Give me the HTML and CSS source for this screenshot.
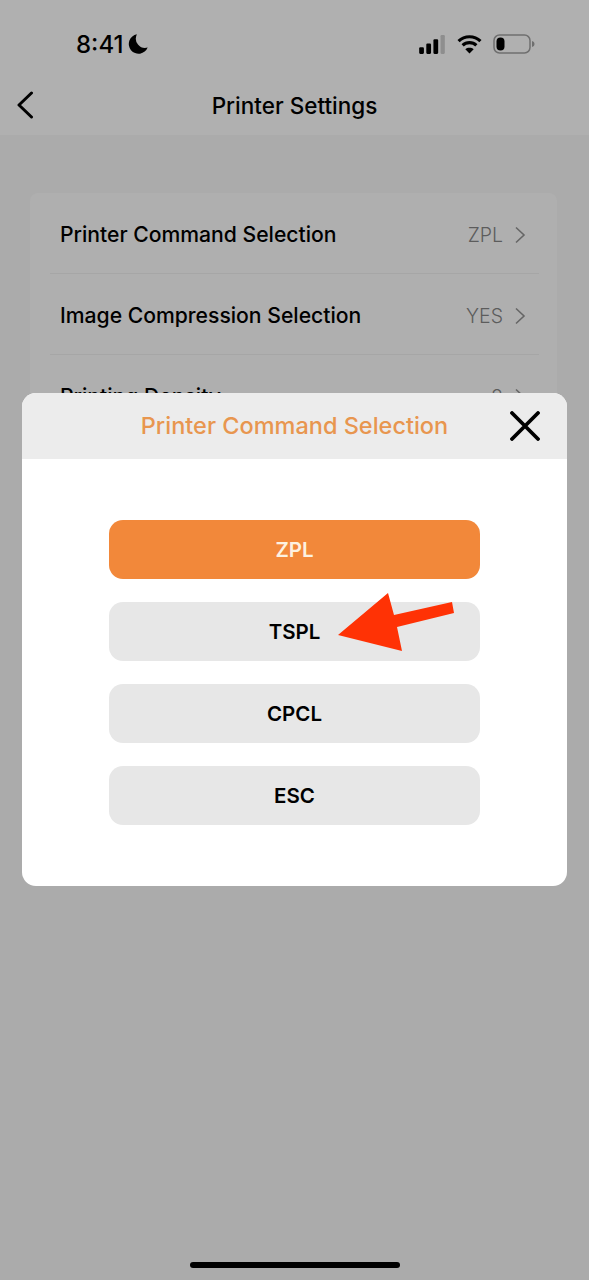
FILE: index.html
```html
<!DOCTYPE html>
<html lang="en">
<head>
    <meta charset="UTF-8">
    <meta name="viewport" content="width=device-width, initial-scale=1.0">
    <title>Printer Settings</title>
    <link rel="stylesheet" href="styles.css">
</head>
<body>
    <div class="screen">
        <div class="top">
            <div class="status-bar">
                <div class="status-time">
                    <span>8:41</span>
                    <svg class="moon" width="20" height="20" viewBox="0 0 18 18"><path d="M8 .3A8.800 8.800 0 1 0 17.700 12.200 8.400 8.400 0 0 1 8 .3Z" fill="#000"/></svg>
                </div>
                <div class="status-icons">
                    <svg width="28" height="19" viewBox="0 0 27 20">
                        <rect x="0" y="13" width="5" height="7" rx="1.2" fill="#000"/>
                        <rect x="7.5" y="9" width="5" height="11" rx="1.2" fill="#000"/>
                        <rect x="15" y="4.500" width="5" height="15.500" rx="1.2" fill="#000"/>
                        <rect x="22.500" y="0" width="4.500" height="20" rx="1.200" fill="#8e8e8e"/>
                    </svg>
                    <svg width="25" height="20" viewBox="0 0 24 19" fill="none" stroke="#000" stroke-width="3">
                        <path d="M1.500 6.700C7.300 1.100 16.700 1.100 22.500 6.700"/>
                        <path d="M5.400 10.800C9 7.300 15 7.300 18.600 10.800"/>
                        <path d="M12 18.500 8 14.500C10.200 12.700 13.800 12.700 16 14.500Z" fill="#000" stroke="none"/>
                    </svg>
                    <svg width="42" height="20" viewBox="0 0 42 20">
                        <rect x="1" y="1" width="36" height="18" rx="5.500" fill="none" stroke="#6f6f6f" stroke-width="1.500"/>
                        <rect x="3.500" y="3.500" width="8" height="13" rx="4" fill="#000"/>
                        <path d="M39 7c1.500 .4 2.500 1.500 2.500 3s-1 2.600-2.500 3Z" fill="#6f6f6f"/>
                    </svg>
                </div>
            </div>
            <div class="nav-bar">
                <svg class="back" width="18" height="28" viewBox="0 0 18 28" fill="none" stroke="#000" stroke-width="3" stroke-linecap="round" stroke-linejoin="round"><path d="M15.500 2 3 14 15.500 26"/></svg>
                <h1>Printer Settings</h1>
            </div>
        </div>

        <div class="card">
            <div class="row">
                <span class="row-name">Printer Command Selection</span>
                <span class="row-value">ZPL</span>
                <svg class="chevron" width="12" height="18" viewBox="0 0 12 18" fill="none" stroke="#666" stroke-width="1.600"><path d="M2 1.500 10 9 2 16.500"/></svg>
            </div>
            <div class="row">
                <span class="row-name">Image Compression Selection</span>
                <span class="row-value">YES</span>
                <svg class="chevron" width="12" height="18" viewBox="0 0 12 18" fill="none" stroke="#666" stroke-width="1.600"><path d="M2 1.500 10 9 2 16.500"/></svg>
            </div>
            <div class="row">
                <span class="row-name">Printing Density</span>
                <span class="row-value">8</span>
                <svg class="chevron" width="12" height="18" viewBox="0 0 12 18" fill="none" stroke="#666" stroke-width="1.600"><path d="M2 1.500 10 9 2 16.500"/></svg>
            </div>
        </div>

        <div class="modal">
            <div class="modal-head">
                <span class="modal-title">Printer Command Selection</span>
                <svg class="close" width="30" height="30" viewBox="0 0 30 30" fill="none" stroke="#000" stroke-width="3.800" stroke-linecap="round"><path d="M2 2 28 28M28 2 2 28"/></svg>
            </div>
            <div class="modal-body">
                <button class="option active">ZPL</button>
                <button class="option">TSPL</button>
                <button class="option">CPCL</button>
                <button class="option">ESC</button>
            </div>
        </div>

        <svg class="arrow" width="130" height="70" viewBox="0 0 130 70"><path d="M2 47 52 5 58 27 116 14 118 25 61 39 66 63Z" fill="#ff3205"/></svg>

        <div class="home-bar"></div>
    </div>
</body>
</html>
```

FILE: styles.css
```css
* {
    box-sizing: border-box;
}

body {
    margin: 0;
    font-family: Inter, "Liberation Sans", sans-serif;
    color: #000;
    background-color: #ababab;
}

.screen {
    position: relative;
    width: 589px;
    height: 1280px;
    overflow: hidden;
}

.top {
    height: 135px;
    background-color: #b0b0b0;
}

.status-bar {
    height: 78px;
    padding: 10px 54px 0 76px;
    display: flex;
    justify-content: space-between;
    align-items: center;
}

.status-time {
    display: flex;
    align-items: center;
    gap: 5px;
    font-size: 24px;
    font-weight: 500;
}

.status-icons {
    display: flex;
    align-items: center;
    gap: 11px;
}

.nav-bar {
    position: relative;
    height: 54px;
    display: flex;
    align-items: center;
    justify-content: center;
}

.nav-bar h1 {
    margin: 0;
    font-size: 22.500px;
    font-weight: 500;
}

.back {
    position: absolute;
    left: 16px;
    top: 13px;
}

.card {
    margin: 58px 32px 0 30px;
    padding: 0 18px 0 20px;
    background-color: #afafaf;
    border-radius: 8px;
}

.row {
    height: 81px;
    padding: 3px 13px 0 10px;
    display: flex;
    align-items: center;
    border-bottom: 1px solid #a6a6a6;
}

.row-name {
    flex: 1;
    font-size: 21.150px;
    font-weight: 500;
}

.row-value {
    margin-right: 11px;
    font-size: 19.500px;
    font-weight: 300;
    color: #5c5c5c;
}

.modal {
    position: absolute;
    left: 22px;
    top: 393px;
    width: 545px;
    height: 493px;
    background-color: #fff;
    border-radius: 14px;
    overflow: hidden;
}

.modal-head {
    position: relative;
    height: 66px;
    padding-bottom: 1px;
    display: flex;
    align-items: center;
    justify-content: center;
    background-color: #ececec;
}

.modal-title {
    font-size: 23.500px;
    font-weight: 500;
    color: #e8964f;
}

.close {
    position: absolute;
    right: 27px;
    top: 18px;
}

.modal-body {
    padding: 61px 87px 0;
    display: flex;
    flex-direction: column;
    gap: 23px;
}

.option {
    height: 59px;
    border: none;
    border-radius: 14px;
    background-color: #e7e7e7;
    color: #000;
    font-family: inherit;
    font-size: 20.500px;
    font-weight: 600;
}

.option.active {
    background-color: #f2883a;
    color: #fdf1e0;
}

.arrow {
    position: absolute;
    left: 336px;
    top: 588px;
}

.home-bar {
    position: absolute;
    left: 190px;
    top: 1262px;
    width: 210px;
    height: 6px;
    border-radius: 3px;
    background-color: #000;
}
```
